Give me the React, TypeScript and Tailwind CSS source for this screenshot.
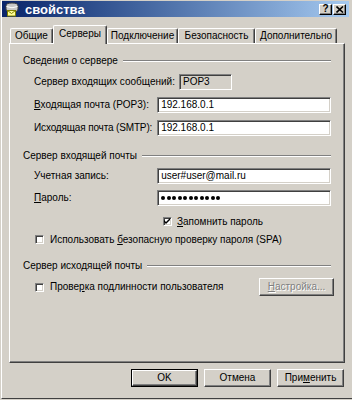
const font = "font-['Liberation_Sans',Arial,sans-serif]"

function Sunken({ className = '', children }: { className?: string; children?: React.ReactNode }) {
  return (
    <div
      className={
        'border border-t-[#808080] border-l-[#808080] border-r-white border-b-white shadow-[inset_1px_1px_0_#404040,inset_-1px_-1px_0_#d4d0c8] ' +
        className
      }
    >
      {children}
    </div>
  )
}

function Field({ value }: { value: string }) {
  return (
    <Sunken className="h-[16px] w-[175px] bg-white flex items-center pl-[3px] leading-none whitespace-nowrap">{value}</Sunken>
  )
}

function Check({ checked }: { checked?: boolean }) {
  return (
    <Sunken className="w-[9px] h-[9px] bg-white shrink-0 flex items-center justify-center">
      {checked && (
        <svg width="7" height="7" viewBox="0 0 7 7">
          <path d="M0 2 L2 4 L6 0 L6 2 L2 6 L0 4 Z" fill="#000" />
        </svg>
      )}
    </Sunken>
  )
}

function GroupHeader({ title }: { title: string }) {
  return (
    <div className="flex items-center h-[14px]">
      <span className="leading-none whitespace-nowrap">{title}</span>
      <div className="flex-1 ml-[5px] border-t border-t-[#808080] border-b border-b-white" />
    </div>
  )
}

function Tab({ label, active, w }: { label: string; active?: boolean; w: string }) {
  return (
    <div
      className={
        'flex items-center justify-center shrink-0 whitespace-nowrap bg-[#d4d0c8] border-t border-l border-r border-t-white border-l-white border-r-[#404040] rounded-t-[2px] shadow-[inset_-1px_0_0_#808080] leading-none ' +
        w +
        (active ? ' h-[19px] -mb-[1px] relative z-10 pb-[2px]' : ' h-[15px]')
      }
    >
      {label}
    </div>
  )
}

function Button({ children, isDefault, disabled, w }: { children: React.ReactNode; isDefault?: boolean; disabled?: boolean; w: string }) {
  const inner = (
    <div
      className={
        'h-full w-full flex items-center justify-center whitespace-nowrap border border-t-white border-l-white border-r-[#404040] border-b-[#404040] shadow-[inset_-1px_-1px_0_#808080] leading-none ' +
        (disabled ? 'text-[#808080] [text-shadow:1px_1px_0_#fff]' : '')
      }
    >
      {children}
    </div>
  )
  if (isDefault) {
    return <div className={'h-[18px] border border-black ' + w}>{inner}</div>
  }
  return <div className={'h-[18px] ' + w}>{inner}</div>
}

function TitleIcon() {
  return (
    <svg width="16" height="15" viewBox="0 0 16 15">
      <path d="M2 4 Q2 1 8 1 Q14 1 14 4 L14 7 Q14 10 8 10 Q2 10 2 7 Z" fill="#c8c8c8" stroke="#404040" strokeWidth="1" />
      <path d="M2.5 4.5 Q8 7 13.5 4.5" fill="none" stroke="#ffffff" strokeWidth="1" />
      <rect x="3.5" y="8.5" width="8" height="5.5" fill="#ffff99" stroke="#808000" />
      <path d="M3.5 8.5 L7.5 11.5 L11.5 8.5" fill="none" stroke="#808000" />
    </svg>
  )
}

function TitleButton({ children }: { children: React.ReactNode }) {
  return (
    <div className="w-[13px] h-[11px] bg-[#d4d0c8] border border-t-white border-l-white border-r-black border-b-black shadow-[inset_-1px_-1px_0_#808080] flex items-center justify-center">
      {children}
    </div>
  )
}

export default function App() {
  return (
    <div className={'w-[352px] h-[400px] bg-[#d4d0c8] text-[10px] text-black overflow-hidden ' + font}>
      <div className="ml-[1px] h-[399px] border-l border-l-white border-b border-b-[#404040] pt-[1px]">
        <div className="w-[347px] h-[16px] bg-linear-to-r from-[#0a246a] to-[#a6caf0] flex items-center pl-[2px] pr-[3px]">
          <TitleIcon />
          <span className="ml-[5px] text-white font-bold text-[13px] leading-none">свойства</span>
          <div className="flex-1" />
          <TitleButton>
            <span className="font-bold text-[10px] leading-none">?</span>
          </TitleButton>
          <div className="w-[1px]" />
          <TitleButton>
            <svg width="8" height="7" viewBox="0 0 8 7">
              <path d="M0.5 0.5 L7 6.5 M7 0.5 L0.5 6.5" stroke="#000" strokeWidth="1.6" />
            </svg>
          </TitleButton>
        </div>

        <div className="mt-[8px] h-[18px] pl-[8px] flex items-end">
          <Tab label="Общие" w="w-[43px]" />
          <Tab label="Серверы" w="w-[54px]" active />
          <Tab label="Подключение" w="w-[71px]" />
          <Tab label="Безопасность" w="w-[77px]" />
          <Tab label="Дополнительно" w="w-[82px]" />
        </div>

        <div className="ml-[7px] w-[336px] h-[320px] border border-t-white border-l-white border-r-[#404040] border-b-[#404040] shadow-[inset_-1px_-1px_0_#808080] pt-[10px] pl-[13px] pr-[13px] flex flex-col">
          <GroupHeader title="Сведения о сервере" />
          <div className="mt-[6px] h-[16px] ml-[11px] flex items-center">
            <span className="w-[145px] leading-none whitespace-nowrap">Сервер входящих сообщений:</span>
            <Sunken className="h-[16px] w-[53px] flex items-center pl-[3px] leading-none">POP3</Sunken>
          </div>
          <div className="mt-[7px] h-[16px] ml-[11px] flex items-center">
            <span className="w-[124px] leading-none whitespace-nowrap">
              <span className="underline">В</span>ходящая почта (POP3):
            </span>
            <Field value="192.168.0.1" />
          </div>
          <div className="mt-[7px] h-[16px] ml-[11px] flex items-center">
            <span className="w-[124px] leading-none whitespace-nowrap tracking-[-0.15px]">Исходящая почта (SMTP):</span>
            <Field value="192.168.0.1" />
          </div>

          <div className="mt-[13px]">
            <GroupHeader title="Сервер входящей почты" />
          </div>
          <div className="mt-[5px] h-[16px] ml-[11px] flex items-center">
            <span className="w-[124px] leading-none whitespace-nowrap">Учетная запись:</span>
            <Field value="user#user@mail.ru" />
          </div>
          <div className="mt-[6px] h-[16px] ml-[11px] flex items-center">
            <span className="w-[124px] leading-none whitespace-nowrap">
              <span className="underline">П</span>ароль:
            </span>
            <Sunken className="h-[16px] w-[175px] bg-white flex items-center pl-[3px] gap-[1.5px]">
              {Array.from({ length: 11 }).map((_, i) => (
                <span key={i} className="w-[4px] h-[4px] rounded-full bg-black" />
              ))}
            </Sunken>
          </div>
          <div className="mt-[9px] h-[13px] ml-[140px] flex items-center">
            <Check checked />
            <span className="ml-[5px] leading-none whitespace-nowrap">
              <span className="underline">З</span>апомнить пароль
            </span>
          </div>
          <div className="mt-[5px] h-[13px] ml-[12px] flex items-center">
            <Check />
            <span className="ml-[6px] leading-none whitespace-nowrap">
              Использовать <span className="underline">б</span>езопасную проверку пароля (SPA)
            </span>
          </div>

          <div className="mt-[13px]">
            <GroupHeader title="Сервер исходящей почты" />
          </div>
          <div className="mt-[5px] h-[18px] ml-[12px] flex items-center">
            <Check />
            <span className="ml-[6px] leading-none whitespace-nowrap">
              Прове<span className="underline">р</span>ка подлинности пользователя
            </span>
            <div className="flex-1" />
            <div className="mr-[-3px]">
              <Button w="w-[75px]" disabled>
                <span>
                  <span className="underline">Н</span>астройка...
                </span>
              </Button>
            </div>
          </div>
        </div>

        <div className="mt-[6px] w-[342px] flex justify-end gap-[6px]">
          <Button w="w-[67px]" isDefault>
            OK
          </Button>
          <Button w="w-[67px]">Отмена</Button>
          <Button w="w-[67px]">
            <span>
              При<span className="underline">м</span>енить
            </span>
          </Button>
        </div>
      </div>
    </div>
  )
}
